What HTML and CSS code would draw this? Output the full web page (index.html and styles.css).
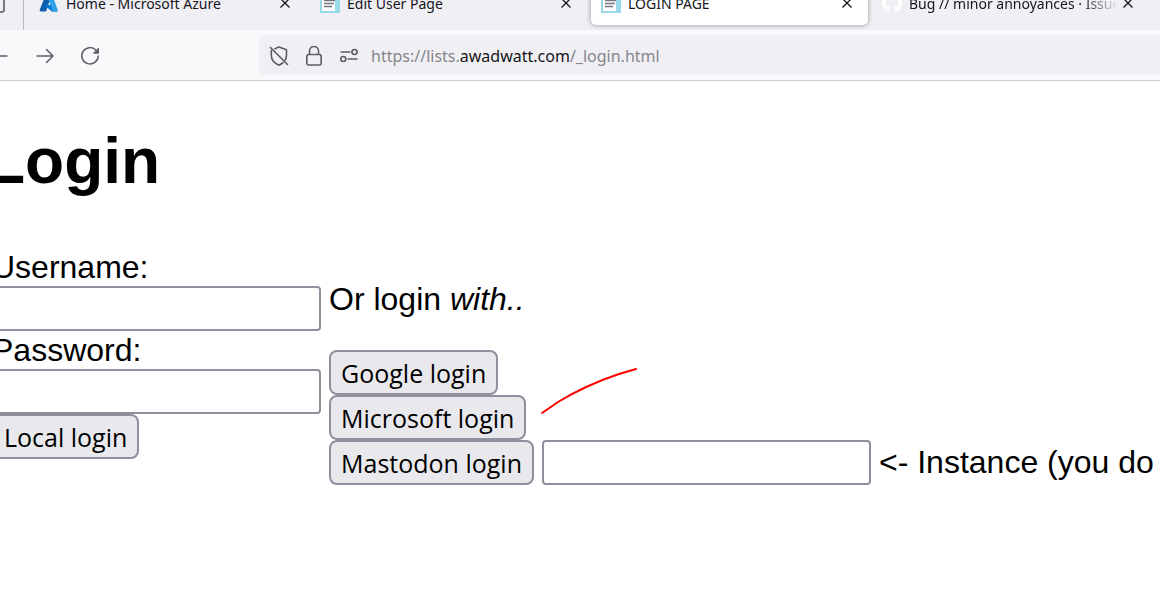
FILE: index.html
```html
<!DOCTYPE html>
<html lang="en">
<head>
<meta charset="utf-8">
<title>LOGIN PAGE</title>
<link rel="stylesheet" href="styles.css">
</head>
<body>
<header class="browser">
  <div class="tabstrip">
    <div class="pinned">
      <svg class="view-icon" width="20" height="20" viewBox="0 0 20 20" fill="none" stroke="#5b5b66" stroke-width="1.6"><rect x="1" y="1" width="18" height="18" rx="2"/></svg>
    </div>
    <div class="tabs">
      <div class="tab">
        <svg class="favicon" width="20" height="20" viewBox="0 0 20 20"><path d="M7 1h6L7 18.500H2Q0 18.500 1 16Z" fill="#0f5fae"/><path d="M5 12h10l4 6.500h-6Z" fill="#0078d4"/><path d="M7 1h6l5.500 15.500q.7 2-1.500 2h-5q2 0 1.300-2Z" fill="#2f9fea"/></svg>
        <span class="tab-title">Home - Microsoft Azure</span>
        <button class="close" aria-label="Close tab"><svg width="12" height="12" viewBox="0 0 12 12" stroke="#15141a" stroke-width="1.300"><path d="M1.500 1.500l9 9M10.500 1.500l-9 9"/></svg></button>
      </div>
      <div class="tab">
        <svg class="favicon" width="20" height="20" viewBox="0 0 20 20"><path d="M0 0h20v20H0z" fill="#98d9ea"/><path d="M2 0h10l3 5v13H2z" fill="#fff"/><path d="M4 7.500h11M4 10.500h10M4 13.500h8" stroke="#76767e" stroke-width="1.300"/></svg>
        <span class="tab-title">Edit User Page</span>
        <button class="close" aria-label="Close tab"><svg width="12" height="12" viewBox="0 0 12 12" stroke="#15141a" stroke-width="1.300"><path d="M1.500 1.500l9 9M10.500 1.500l-9 9"/></svg></button>
      </div>
      <div class="tab active">
        <svg class="favicon" width="20" height="20" viewBox="0 0 20 20"><path d="M0 0h20v20H0z" fill="#98d9ea"/><path d="M2 0h10l3 5v13H2z" fill="#fff"/><path d="M4 7.500h11M4 10.500h10M4 13.500h8" stroke="#76767e" stroke-width="1.300"/></svg>
        <span class="tab-title">LOGIN PAGE</span>
        <button class="close" aria-label="Close tab"><svg width="12" height="12" viewBox="0 0 12 12" stroke="#15141a" stroke-width="1.300"><path d="M1.500 1.500l9 9M10.500 1.500l-9 9"/></svg></button>
      </div>
      <div class="tab">
        <svg class="favicon" width="20" height="20" viewBox="0 0 16 16"><path fill="#fff" d="M8 0C3.580 0 0 3.580 0 8c0 3.540 2.290 6.530 5.470 7.590.4.070.55-.17.55-.38 0-.19-.01-.82-.01-1.490-2.010.37-2.530-.49-2.690-.94-.09-.23-.48-.94-.82-1.130-.28-.15-.68-.52-.01-.53.63-.01 1.080.58 1.230.82.72 1.210 1.870.87 2.330.66.070-.52.28-.87.510-1.070-1.780-.2-3.640-.89-3.640-3.950 0-.87.310-1.590.82-2.150-.08-.2-.36-1.020.08-2.120 0 0 .67-.21 2.200.82a7.600 7.600 0 0 1 4 0c1.530-1.040 2.200-.82 2.200-.82.44 1.100.16 1.920.08 2.120.51.56.82 1.270.82 2.150 0 3.070-1.870 3.750-3.650 3.950.29.25.54.73.54 1.480 0 1.070-.01 1.930-.01 2.200 0 .21.15.46.55.38A8 8 0 0 0 16 8c0-4.420-3.580-8-8-8Z"/></svg>
        <span class="tab-title long">Bug // minor annoyances · Issue</span>
        <button class="close" aria-label="Close tab"><svg width="12" height="12" viewBox="0 0 12 12" stroke="#15141a" stroke-width="1.300"><path d="M1.500 1.500l9 9M10.500 1.500l-9 9"/></svg></button>
      </div>
    </div>
  </div>
  <nav class="toolbar">
    <button class="tool" aria-label="Back"><svg width="20" height="20" viewBox="0 0 20 20" fill="none" stroke="#5b5b66" stroke-width="1.500" stroke-linecap="round" stroke-linejoin="round"><path d="M17 10H0M7 3l-7 7 7 7"/></svg></button>
    <button class="tool" aria-label="Forward"><svg width="20" height="20" viewBox="0 0 20 20" fill="none" stroke="#5b5b66" stroke-width="1.500" stroke-linecap="round" stroke-linejoin="round"><path d="M2 10h16M11.500 3.500L18 10l-6.500 6.500"/></svg></button>
    <button class="tool" aria-label="Reload"><svg width="20" height="20" viewBox="0 0 20 20" fill="none" stroke="#5b5b66" stroke-width="1.500" stroke-linecap="round"><path d="M16 4.200A8.200 8.200 0 1 0 18.200 10"/><path d="M18.500 2.500v4.700h-4.700Z" fill="#5b5b66" stroke-width="1"/></svg></button>
    <div class="urlbar">
      <svg width="20" height="20" viewBox="0 0 20 20" fill="none" stroke="#5b5b66" stroke-width="1.600" stroke-linecap="round" stroke-linejoin="round"><path d="M1.500 1.500l17 17M6 2.800L10 .9l7.500 2.800v5.300q0 2.800-1.200 5M2.300 4.500v4.500q0 7 7.700 10.200 2.300-1 4-2.500"/></svg>
      <svg width="20" height="20" viewBox="0 0 20 20" fill="none" stroke="#5b5b66" stroke-width="1.600"><rect x="2.800" y="8.500" width="14.400" height="10.500" rx="2"/><path d="M5.500 8.500V5a4.500 4.500 0 0 1 9 0v3.500"/></svg>
      <svg width="20" height="20" viewBox="0 0 20 20" fill="none" stroke="#5b5b66" stroke-width="1.600"><path d="M1.500 6h10M8.500 13h10"/><circle cx="15.500" cy="6" r="2.500"/><circle cx="4.300" cy="13" r="2.500"/></svg>
      <span class="url">https://lists.<b class="domain">awadwatt.com</b>/_login.html</span>
    </div>
  </nav>
</header>
<main class="page">
  <h1 class="title">Login</h1>
  <div class="columns">
    <form class="local">
      <label class="label" for="user">Username:</label>
      <input class="field" id="user" type="text">
      <label class="label" for="pass">Password:</label>
      <input class="field" id="pass" type="password">
      <button class="btn" type="button">Local login</button>
    </form>
    <div class="other">
      <p class="or">Or login <em>with..</em></p>
      <button class="btn" type="button">Google login</button>
      <button class="btn" type="button">Microsoft login</button>
      <div class="instance">
        <button class="btn" type="button">Mastodon login</button>
        <input class="field" id="instance" type="text">
        <label for="instance">&lt;- Instance (you do</label>
      </div>
      <svg class="stroke" width="98" height="48" viewBox="0 0 98 48" fill="none" stroke="#f00" stroke-width="2" stroke-linecap="round" stroke-linejoin="round"><path d="M2 46L13 38.500 18 35Q46 18 79 7L96 2"/></svg>
    </div>
  </div>
</main>
</body>
</html>
```
FILE: styles.css
```css
* { box-sizing: border-box; }
body {
  margin: 0;
  background: #fff;
  color: #000;
  font-family: "Liberation Sans", Arial, sans-serif;
  overflow: hidden;
}
button { cursor: pointer; }
svg { flex: none; display: block; }

.browser {
  font-family: "Noto Sans", "Segoe UI", sans-serif;
  color: #15141a;
  border-bottom: 1px solid #ccc;
  background: #f9f9fb;
}
.tabstrip {
  display: flex;
  height: 30px;
  background: #f0f0f4;
  overflow: hidden;
}
.pinned {
  display: flex;
  flex: none;
  align-items: flex-end;
  justify-content: flex-end;
  width: 24px;
  padding: 0 18px 17px 0;
  border-right: 1px solid #b9b9c0;
}
.tabs {
  display: flex;
  align-items: flex-end;
  gap: 4px;
  padding: 0 0 5px 5px;
}
.tab {
  display: flex;
  flex: none;
  align-items: center;
  width: 277px;
  height: 44px;
  padding: 0 11px 0 10px;
  border-radius: 5px;
  font-size: 14px;
}
.tab.active {
  background: #fff;
  box-shadow: 0 0 5px rgba(0, 0, 0, .4);
}
.favicon { margin-right: 7px; }
.tab-title {
  flex: 1;
  min-width: 0;
  overflow: hidden;
  white-space: nowrap;
}
.tab-title.long { mask-image: linear-gradient(to left, transparent, #000 36px); }
.close, .tool {
  display: grid;
  place-items: center;
  flex: none;
  padding: 0;
  border: 0;
  background: none;
}
.close { width: 20px; height: 20px; }

.toolbar {
  display: flex;
  align-items: center;
  height: 50px;
  margin-left: -23px;
}
.tool { width: 45px; height: 40px; padding-top: 2px; }
.urlbar {
  display: flex;
  flex: 1;
  align-items: center;
  gap: 15px;
  height: 40px;
  margin-left: 147px;
  padding: 2px 0 0 10px;
  border-radius: 5px 0 0 5px;
  background: #f0f0f4;
}
.url {
  margin-left: -3px;
  font-size: 16px;
  color: #85858c;
  white-space: nowrap;
}
.domain { font-weight: 400; color: #15141a; }

.page {
  margin-left: -14px;
  padding-top: 43px;
  font-size: 32px;
  line-height: 37px;
}
.title {
  margin: 0 0 51px;
  font-size: 64px;
  line-height: 74px;
}
.columns {
  display: flex;
  align-items: flex-start;
  gap: 8px;
  padding-left: 6px;
}
.local, .other {
  display: flex;
  flex: none;
  flex-direction: column;
  align-items: flex-start;
}
.other { position: relative; }
.field + .label { padding-top: 1px; }
.field {
  width: 329px;
  height: 45px;
  padding: 0 6px;
  border: 2px solid #8f8f9d;
  border-radius: 4px;
  background: #fff;
  font: inherit;
}
.btn {
  height: 45px;
  padding: 0 10px;
  border: 2px solid #8f8f9d;
  border-radius: 8px;
  background: #e9e9ed;
  color: #000;
  font: 25px/36px "Open Sans", Tahoma, sans-serif;
  white-space: nowrap;
}
.or { margin: 32px 0; }
.instance {
  display: flex;
  align-items: center;
  gap: 8px;
  white-space: nowrap;
}
.stroke {
  position: absolute;
  left: 211px;
  top: 118px;
}
```
